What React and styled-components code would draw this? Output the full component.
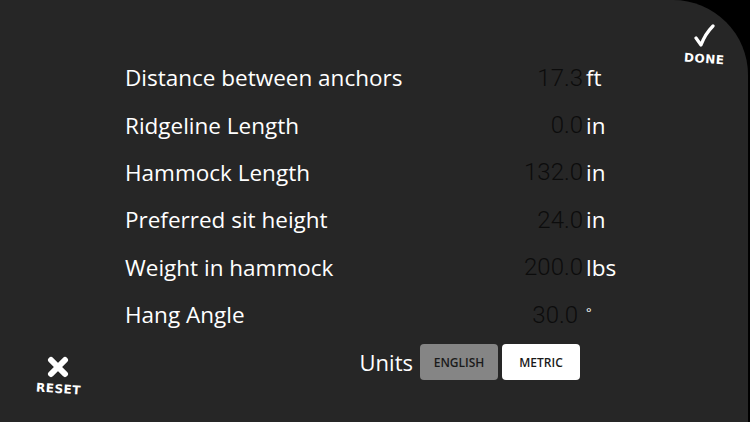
import styled, { createGlobalStyle } from "styled-components";

const GlobalStyle = createGlobalStyle`
  html, body {
    margin: 0;
    padding: 0;
    background: #000;
  }
`;

const fields = [
  { label: "Distance between anchors", value: "17.3", unit: "ft" },
  { label: "Ridgeline Length", value: "0.0", unit: "in" },
  { label: "Hammock Length", value: "132.0", unit: "in" },
  { label: "Preferred sit height", value: "24.0", unit: "in" },
  { label: "Weight in hammock", value: "200.0", unit: "lbs" },
  { label: "Hang Angle", value: "30.0", unit: "°", small: true },
];

function App() {
  return (
    <>
      <GlobalStyle />
      <Panel>
        <Gutter $align="end">
          <CornerButton>
            <svg width="22" height="22" viewBox="0 0 22 22">
              <line x1="4" y1="4" x2="18" y2="18" stroke="#fff" strokeWidth="6" strokeLinecap="round" />
              <line x1="18" y1="4" x2="4" y2="18" stroke="#fff" strokeWidth="6" strokeLinecap="round" />
            </svg>
            <CornerLabel>RESET</CornerLabel>
          </CornerButton>
        </Gutter>

        <Main>
          <Form>
            {fields.map((f) => (
              <Row key={f.label}>
                <Label>{f.label}</Label>
                <Value>{f.value}</Value>
                <Unit $small={f.small}>{f.unit}</Unit>
              </Row>
            ))}
          </Form>
          <UnitsRow>
            <UnitsLabel>Units</UnitsLabel>
            <Toggle $active>ENGLISH</Toggle>
            <Toggle>METRIC</Toggle>
          </UnitsRow>
        </Main>

        <Gutter $align="start">
          <CornerButton $top>
            <svg width="22" height="24" viewBox="0 0 22 24">
              <path
                d="M3 14 L8 21 C11 13 15 7 20 2"
                fill="none"
                stroke="#fff"
                strokeWidth="3.2"
                strokeLinecap="round"
                strokeLinejoin="round"
              />
            </svg>
            <CornerLabel>DONE</CornerLabel>
          </CornerButton>
        </Gutter>
      </Panel>
    </>
  );
}

const Panel = styled.div`
  width: 748px;
  height: 422px;
  background: #262626;
  border-top-right-radius: 75px;
  display: grid;
  grid-template-columns: 116px 1fr 88px;
  box-sizing: border-box;
  font-family: "Open Sans", sans-serif;
  color: #fff;
`;

const Gutter = styled.div`
  display: flex;
  flex-direction: column;
  align-items: center;
  justify-content: flex-${(p) => p.$align};
`;

const CornerButton = styled.div`
  display: flex;
  flex-direction: column;
  align-items: center;
  gap: 4px;
  margin: ${(p) => (p.$top ? "24px 0 0" : "0 0 26px")};
  cursor: pointer;
`;

const CornerLabel = styled.span`
  font-family: "DejaVu Sans", sans-serif;
  font-weight: 600;
  font-size: 12px;
  letter-spacing: 0.5px;
  line-height: 14px;
  transform: rotate(4deg);
`;

const Main = styled.div`
  display: flex;
  flex-direction: column;
  padding: 54px 0 0 9px;
`;

const Form = styled.div`
  display: flex;
  flex-direction: column;
`;

const Row = styled.div`
  display: flex;
  align-items: center;
  height: 47.4px;
`;

const Label = styled.span`
  flex: 1;
  font-size: 22.5px;
`;

const Value = styled.span`
  font-family: Roboto, "Liberation Sans", sans-serif;
  font-weight: 300;
  font-size: 24px;
  color: #0c0c0c;
  text-align: right;
`;

const Unit = styled.span`
  width: 74px;
  margin-left: 3px;
  font-size: ${(p) => (p.$small ? "13px" : "22.5px")};
  align-self: ${(p) => (p.$small ? "flex-start" : "center")};
  margin-top: ${(p) => (p.$small ? "12px" : "0")};
  padding-left: ${(p) => (p.$small ? "5px" : "0")};
`;

const UnitsRow = styled.div`
  display: flex;
  align-items: center;
  justify-content: flex-end;
  gap: 4px;
  padding-right: 80px;
  margin-top: 6px;
`;

const UnitsLabel = styled.span`
  font-size: 22px;
  margin-right: 3px;
`;

const Toggle = styled.button`
  width: 78px;
  height: 36px;
  border: none;
  border-radius: 4px;
  background: ${(p) => (p.$active ? "#858585" : "#fff")};
  color: #1a1a1a;
  font-family: "Open Sans", sans-serif;
  font-size: 12px;
  font-weight: 600;
  padding: 0;
  cursor: pointer;
`;

export default App;
